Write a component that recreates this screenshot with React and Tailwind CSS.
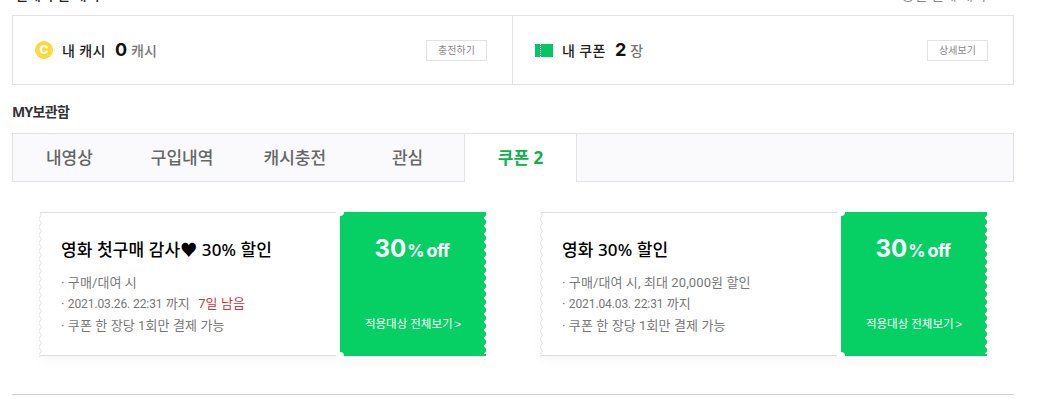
const KR = 'font-["Noto_Sans","Noto_Sans_CJK_KR",sans-serif]'

function WavyEdge() {
  const bumps = []
  for (let y = 0; y < 144; y += 8) bumps.push(`Q 4 ${y + 2} 1 ${y + 4} Q -2 ${y + 6} 1 ${y + 8}`)
  return (
    <svg className="absolute left-[-1px] top-0 h-[144px] w-[5px]" viewBox="0 0 5 144" fill="none">
      <path d={`M1 0 ${bumps.join(' ')} L0 144 L0 0 Z`} fill="#fff" />
      <path d={`M1 0 ${bumps.join(' ')}`} stroke="#e2e2e2" strokeWidth="1" />
    </svg>
  )
}

function Coupon({ title, lines }) {
  return (
    <div className="flex h-[144px] w-[446px] shadow-[0_4px_10px_rgba(0,0,0,0.04)]">
      <div className="relative w-[300px] border-y border-[#ddd] bg-white pl-[21px] pt-[24px]">
        <WavyEdge />
        <h3 className="text-[17px] font-medium leading-[26px] tracking-[0.1px] text-black">{title}</h3>
        <ul className="mt-[9px] font-['Roboto','Noto_Sans_CJK_KR',sans-serif] text-[13px] leading-[21px] tracking-[0.1px] text-[#777]">
          {lines.map((line, i) => (
            <li key={i}>· {line}</li>
          ))}
        </ul>
      </div>
      <div className="relative flex w-[146px] flex-col items-center bg-[#06d064] text-white">
        <div className="absolute left-[-4px] top-[-4px] h-[8px] w-[8px] rounded-full bg-white" />
        <div className="absolute bottom-[-4px] left-[-4px] h-[8px] w-[8px] rounded-full bg-white" />
        <div className="absolute right-[-1px] top-[2px] h-[140px] w-[4px] bg-[radial-gradient(circle_at_right,#fff_2.5px,transparent_3px)] bg-[length:4px_8px]" />
        <div className="-ml-[2px] mt-[21px] flex items-baseline font-['Inter',sans-serif] font-bold leading-[32px]">
          <span className="text-[24px]">30</span>
          <span className="ml-[1px] text-[17px]">%</span>
          <span className="ml-[2px] text-[18px] tracking-[-0.5px]">off</span>
        </div>
        <div className="mt-[49px] flex items-center text-[11.5px] leading-[16px]">
          적용대상 전체보기
          <span className="ml-[2px] font-['Liberation_Sans',sans-serif] text-[11px]">&gt;</span>
        </div>
      </div>
    </div>
  )
}

function SummaryCell({ icon, label, count, unit, action, border }) {
  return (
    <div className={`flex h-full items-center justify-between pl-[22px] pr-[25px] ${border ? 'w-[500px] border-r border-[#e2e2e2]' : 'flex-1'}`}>
      <div className="flex items-center">
        {icon}
        <span className="ml-[9px] text-[14px] font-medium tracking-[0.4px] text-[#222]">{label}</span>
        <span className="ml-[9px] font-['Inter',sans-serif] text-[18px] font-bold leading-none text-[#111]">{count}</span>
        <span className="ml-[4px] text-[14px] font-medium text-[#777]">{unit}</span>
      </div>
      <button className="h-[21px] w-[61px] border border-[#e2e2e2] text-[10px] text-[#888]">{action}</button>
    </div>
  )
}

function Date({ children }) {
  return <span className="text-[12px] tracking-[-0.1px]">{children}</span>
}

export default function App() {
  const tabs = ['내영상', '구입내역', '캐시충전', '관심']
  return (
    <div className={`h-[411px] w-[1044px] overflow-hidden bg-white pl-3 ${KR}`}>
      <div className="w-[1002px]">
        <div className="-mt-[12px] flex h-[27px] items-start justify-between pl-[3px] pr-[20px] text-[14px] leading-[14px]">
          <span className="font-medium text-[#222]">결제 수단 내역</span>
          <span className="text-[#888]">충전 결제 내역 ›</span>
        </div>

        <div className="flex h-[70px] border border-[#e2e2e2]">
          <SummaryCell
            border
            icon={
              <div className="flex h-[18px] w-[18px] items-center justify-center rounded-full bg-[#fbd93f] font-['Inter',sans-serif] text-[12px] font-extrabold text-white">C</div>
            }
            label="내 캐시"
            count="0"
            unit="캐시"
            action="충전하기"
          />
          <SummaryCell
            icon={
              <div className="flex h-[13px] w-[18px] bg-[#06c663] pl-[5px]">
                <div className="h-full border-l border-dotted border-white" />
              </div>
            }
            label="내 쿠폰"
            count="2"
            unit="장"
            action="상세보기"
          />
        </div>

        <h2 className="mt-[17px] text-[14px] font-bold leading-[20px] tracking-[-0.7px] text-[#333]">MY보관함</h2>

        <div className="mt-[11px] flex h-[49px] border border-[#e2e2e2] bg-[#fafafc]">
          {tabs.map((tab) => (
            <div key={tab} className="flex w-[112.75px] items-center justify-center text-[17px] font-medium text-[#666]">{tab}</div>
          ))}
          <div className="-mb-px flex w-[113px] items-center justify-center border-x border-[#e2e2e2] bg-white text-[17px] font-bold text-[#0bb24c]">쿠폰 2</div>
        </div>

        <div className="ml-[28px] mt-[30px] flex gap-[55px]">
          <Coupon
            title="영화 첫구매 감사♥ 30% 할인"
            lines={[
              '구매/대여 시',
              <><Date>2021.03.26. 22:31</Date> 까지 <span className="ml-[5px] text-[#d0353f]">7일 남음</span></>,
              '쿠폰 한 장당 1회만 결제 가능',
            ]}
          />
          <Coupon
            title="영화 30% 할인"
            lines={[
              '구매/대여 시, 최대 20,000원 할인',
              <><Date>2021.04.03. 22:31</Date> 까지</>,
              '쿠폰 한 장당 1회만 결제 가능',
            ]}
          />
        </div>

        <div className="mt-[38px] border-t border-[#ccc]" />
      </div>
    </div>
  )
}
